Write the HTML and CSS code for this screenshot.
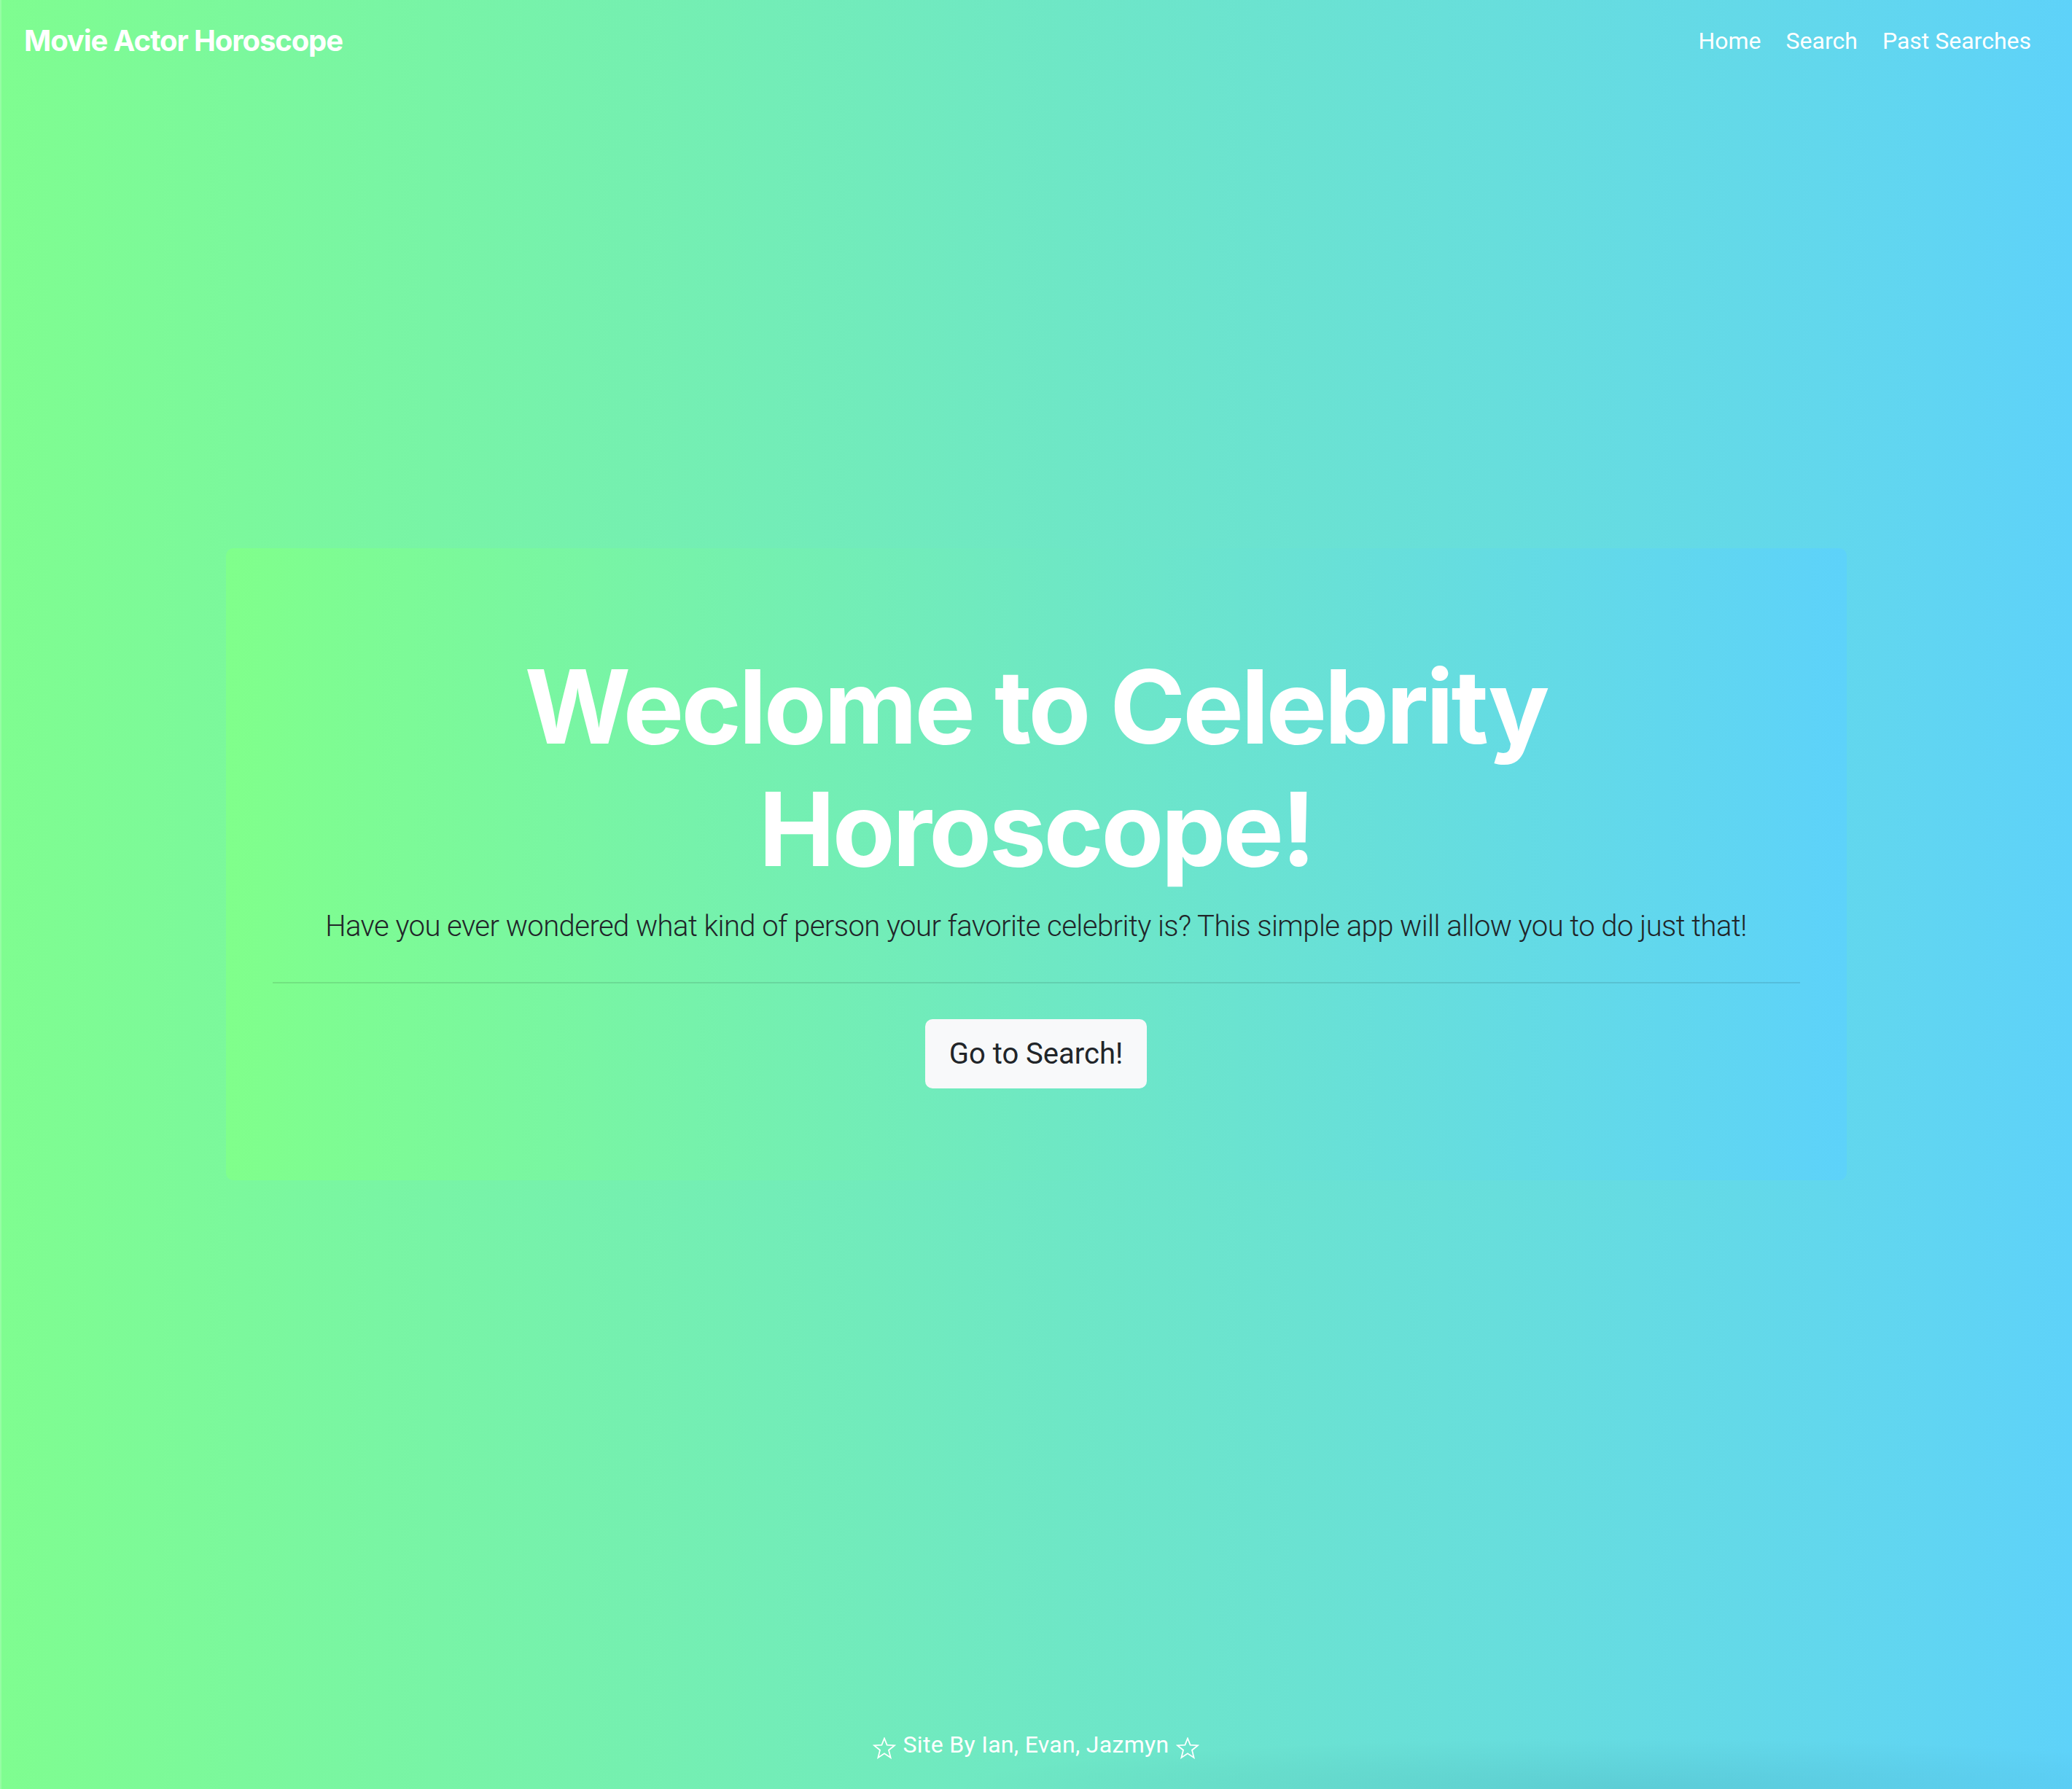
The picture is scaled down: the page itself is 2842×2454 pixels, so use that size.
FILE: index.html
```html
<!DOCTYPE html>
<html lang="en">
<head>
<meta charset="utf-8">
<title>Movie Actor Horoscope</title>
<link rel="stylesheet" href="styles.css">
</head>
<body>
  <nav class="navbar">
    <a class="brand" href="#">Movie Actor Horoscope</a>
    <ul class="nav-links">
      <li><a href="#">Home</a></li>
      <li><a href="#">Search</a></li>
      <li><a href="#">Past Searches</a></li>
    </ul>
  </nav>
  <main class="main">
    <section class="jumbotron">
      <h1 class="display">Weclome to Celebrity Horoscope!</h1>
      <p class="lead">Have you ever wondered what kind of person your favorite celebrity is? This simple app will allow you to do just that!</p>
      <hr class="divider">
      <a class="btn" href="#">Go to Search!</a>
    </section>
  </main>
  <footer class="footer">
    <svg class="star" viewBox="0 0 32 30" width="32" height="30" aria-hidden="true"><path d="M16 1.5 L19.6 10.6 L30 11.2 L22 17.7 L24.6 28 L16 22.3 L7.4 28 L10 17.7 L2 11.2 L12.4 10.6 Z" fill="none" stroke="#fff" stroke-width="1.8" stroke-linejoin="miter"/></svg>
    <span class="credit">Site By Ian, Evan, Jazmyn</span>
    <svg class="star" viewBox="0 0 32 30" width="32" height="30" aria-hidden="true"><path d="M16 1.5 L19.6 10.6 L30 11.2 L22 17.7 L24.6 28 L16 22.3 L7.4 28 L10 17.7 L2 11.2 L12.4 10.6 Z" fill="none" stroke="#fff" stroke-width="1.8" stroke-linejoin="miter"/></svg>
  </footer>
</body>
</html>
```
FILE: styles.css
```css
html, body {
  margin: 0;
  padding: 0;
}
body {
  min-height: 100vh;
  display: flex;
  flex-direction: column;
  font-family: Roboto, "Noto Sans", "Liberation Sans", sans-serif;
  color: #212529;
  background: linear-gradient(to right, #7ffd90, #5ed2f9);
  box-shadow: inset 2px 0 0 rgba(255,255,255,0.18);
  position: relative;
  overflow: hidden;
}
body::after {
  content: "";
  position: absolute;
  left: 1300px;
  right: 0;
  bottom: 0;
  height: 70px;
  background: radial-gradient(ellipse 60% 100% at 60% 100%, rgba(0,60,80,0.09), rgba(0,60,80,0));
  pointer-events: none;
}
a { text-decoration: none; }

.navbar {
  display: flex;
  align-items: center;
  justify-content: space-between;
  height: 112px;
  padding: 0 39px 0 33px;
  box-sizing: border-box;
}
.brand {
  color: #fff;
  font-family: Inter, Roboto, sans-serif;
  font-weight: 700;
  font-size: 40px;
  line-height: 60px;
  letter-spacing: -1.1px;
}
.nav-links {
  display: flex;
  list-style: none;
  margin: 0;
  padding: 0;
}
.nav-links a {
  display: block;
  color: #fff;
  font-size: 32px;
  line-height: 48px;
  padding: 16px 17px;
}

.main {
  display: flex;
  justify-content: center;
  padding-top: 640px;
}
.jumbotron {
  width: 2223px;
  box-sizing: border-box;
  padding: 133px 64px 126px;
  border-radius: 10px;
  background: linear-gradient(to right, #80ff8b, #5dd2fa);
  text-align: center;
  display: flex;
  flex-direction: column;
  align-items: center;
}
.display {
  margin: 0 0 20px;
  color: #fff;
  font-family: Inter, Roboto, sans-serif;
  font-size: 140px;
  line-height: 168px;
  font-weight: 700;
  letter-spacing: -3.5px;
  max-width: 1600px;
}
.lead {
  margin: 0;
  font-size: 40px;
  line-height: 60px;
  font-weight: 300;
  letter-spacing: -0.55px;
  white-space: nowrap;
}
.divider {
  align-self: stretch;
  margin: 46px 0 49px;
  border: 0;
  border-top: 2px solid rgba(0,0,0,0.1);
}
.btn {
  display: inline-block;
  background: #f8f9fa;
  color: #212529;
  font-size: 40px;
  line-height: 61px;
  padding: 17px 33px;
  border-radius: 10px;
}

.footer {
  margin-top: auto;
  display: flex;
  justify-content: center;
  align-items: center;
  gap: 10px;
  color: #fff;
  font-size: 32px;
  line-height: 48px;
  padding-bottom: 37px;
}
.credit {
  letter-spacing: 0.3px;
}
.star {
  display: block;
  margin-top: 10px;
}
```
